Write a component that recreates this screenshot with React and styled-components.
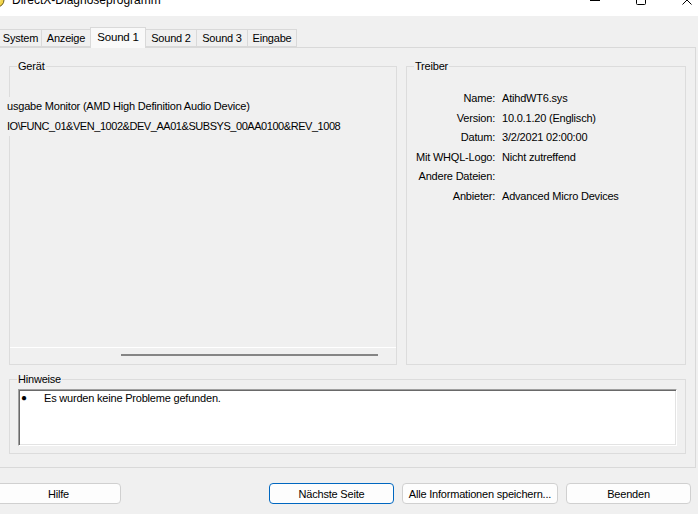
import React from "react";
import styled, { createGlobalStyle } from "styled-components";

const Global = createGlobalStyle`
  html, body { margin: 0; padding: 0; background: #f0f0f0; overflow: hidden; }
  body {
    font-family: "Liberation Sans", Arial, sans-serif;
    font-size: 11px;
    letter-spacing: -0.2px;
    color: #000;
  }
  * { box-sizing: border-box; }
`;

const Window = styled.div`
  width: 715px;
  margin: -16px 0 0 -5px;
  display: flex;
  flex-direction: column;
  background: #f0f0f0;
`;

const TitleBar = styled.div`
  height: 32px;
  background: #fff;
  display: flex;
  align-items: center;
`;

const AppIcon = styled.svg`
  width: 16px;
  height: 16px;
  margin-left: -6px;
  flex: none;
`;

const Title = styled.span`
  margin-left: 7px;
  font-size: 12px;
  letter-spacing: 0;
  white-space: nowrap;
`;

const Controls = styled.div`
  margin-left: auto;
  display: flex;
`;

const ControlButton = styled.div`
  width: 46px;
  height: 32px;
  display: flex;
  align-items: center;
  justify-content: center;
`;

const Client = styled.div`
  padding: 11px 14px 0 4px;
  display: flex;
  flex-direction: column;
`;

const TabStrip = styled.div`
  display: flex;
  align-items: flex-end;
  height: 20px;
`;

const Tab = styled.div`
  position: relative;
  width: ${(p) => p.$w}px;
  height: ${(p) => (p.$active ? 21 : 18)}px;
  margin-left: ${(p) => (p.$first ? 0 : -1)}px;
  margin-bottom: ${(p) => (p.$active ? -1 : 0)}px;
  padding-bottom: ${(p) => (p.$active ? 2 : 0)}px;
  border: 1px solid #d9d9d9;
  border-bottom: ${(p) => (p.$active ? "none" : "1px solid #d9d9d9")};
  background: ${(p) => (p.$active ? "#f9f9f9" : "#f0f0f0")};
  z-index: ${(p) => (p.$active ? 2 : 1)};
  display: flex;
  align-items: center;
  justify-content: center;
  white-space: nowrap;
  font-size: ${(p) => (p.$active ? "11.5px" : "11px")};
`;

const Panel = styled.div`
  height: 421px;
  border: 1px solid #d9d9d9;
  background: #f0f0f0;
  padding: 18px 9px 0 9px;
  display: flex;
  flex-direction: column;
`;

const TopRow = styled.div`
  display: grid;
  grid-template-columns: 388px 280px;
  column-gap: 9px;
  height: 299px;
`;

const GroupBox = styled.div`
  position: relative;
  border: 1px solid #dcdcdc;
  display: flex;
  flex-direction: column;
  height: ${(p) => p.$h || "auto"};
  margin-top: ${(p) => p.$mt || 0}px;
  padding: ${(p) => p.$pad || 0};
`;

const Legend = styled.span`
  position: absolute;
  top: -8px;
  left: 7px;
  padding: 0 1px;
  line-height: 14px;
  background: #f0f0f0;
  white-space: nowrap;
`;

const DeviceLines = styled.div`
  padding-top: 30px;
  flex: 1;
`;

const DeviceLine = styled.div`
  position: relative;
  margin-left: -3px;
  line-height: 19.5px;
  background: #f0f0f0;
  white-space: nowrap;
  width: 340px;
  letter-spacing: ${(p) => p.$ls || "-0.2px"};
`;

const ScrollTrack = styled.div`
  height: 17px;
  border-top: 1px solid #fff;
  padding-top: 6px;
`;

const ScrollThumb = styled.div`
  margin-left: 111px;
  width: 257px;
  height: 2px;
  background: #858585;
`;

const InfoGrid = styled.div`
  display: grid;
  grid-template-columns: 79px auto;
  column-gap: 7px;
  padding: 22px 0 0 9px;
  line-height: 19.5px;
  white-space: nowrap;
`;

const InfoLabel = styled.div`
  text-align: right;
`;

const InfoValue = styled.div``;

const NotesArea = styled.div`
  height: 57px;
  background: #fff;
  border: 1px solid;
  border-color: #a0a0a0 #fff #fff #a0a0a0;
  box-shadow: inset 1px 1px 0 #696969, inset -1px -1px 0 #e3e3e3;
  padding: 1px 0 0 2px;
`;

const NoteRow = styled.div`
  display: flex;
  line-height: 14px;
`;

const Bullet = styled.span`
  width: 23px;
  flex: none;
  font-size: 10px;
`;

const ButtonRow = styled.div`
  display: flex;
  margin: 15px 5px 0 -3px;
  gap: 8px;
`;

const Spacer = styled.div`
  flex: 1;
`;

const Button = styled.button`
  width: ${(p) => p.$w}px;
  height: 21px;
  padding: 0;
  border: 1px solid ${(p) => (p.$primary ? "#0067c0" : "#d0d0d0")};
  border-radius: 4px;
  background: #fdfdfd;
  font-family: inherit;
  font-size: 11px;
  letter-spacing: -0.2px;
  color: #000;
  white-space: nowrap;
  display: flex;
  align-items: center;
  justify-content: center;
`;

const tabs = [
  { label: "System", w: 43 },
  { label: "Anzeige", w: 50 },
  { label: "Sound 1", w: 56, active: true },
  { label: "Sound 2", w: 52 },
  { label: "Sound 3", w: 52 },
  { label: "Eingabe", w: 50 },
];

const driver = [
  ["Name:", "AtihdWT6.sys"],
  ["Version:", "10.0.1.20 (Englisch)"],
  ["Datum:", "3/2/2021 02:00:00"],
  ["Mit WHQL-Logo:", "Nicht zutreffend"],
  ["Andere Dateien:", ""],
  ["Anbieter:", "Advanced Micro Devices"],
];

export default function App() {
  return (
    <>
      <Global />
      <Window>
        <TitleBar>
          <AppIcon viewBox="0 0 16 16">
            <circle cx="8" cy="8" r="7" fill="#f3d54a" stroke="#6b5a1a" strokeWidth="1" />
            <circle cx="8" cy="8" r="3.5" fill="#fbeea0" />
          </AppIcon>
          <Title>DirectX-Diagnoseprogramm</Title>
          <Controls>
            <ControlButton>
              <svg width="10" height="10" viewBox="0 0 10 10">
                <line x1="0" y1="5.5" x2="10" y2="5.5" stroke="#000" strokeWidth="1" />
              </svg>
            </ControlButton>
            <ControlButton>
              <svg width="10" height="10" viewBox="0 0 10 10">
                <rect x="0.5" y="0.5" width="9" height="9" rx="1" fill="none" stroke="#000" strokeWidth="1" />
              </svg>
            </ControlButton>
            <ControlButton>
              <svg width="10" height="10" viewBox="0 0 10 10">
                <path d="M0.5 0.5 L9.5 9.5 M9.5 0.5 L0.5 9.5" stroke="#000" strokeWidth="1" />
              </svg>
            </ControlButton>
          </Controls>
        </TitleBar>
        <Client>
          <TabStrip>
            {tabs.map((t, i) => (
              <Tab key={t.label} $w={t.w} $active={t.active} $first={i === 0}>
                {t.label}
              </Tab>
            ))}
          </TabStrip>
          <Panel>
            <TopRow>
              <GroupBox>
                <Legend>Gerät</Legend>
                <DeviceLines>
                  <DeviceLine>usgabe Monitor (AMD High Definition Audio Device)</DeviceLine>
                  <DeviceLine $ls="-0.45px">IO\FUNC_01&amp;VEN_1002&amp;DEV_AA01&amp;SUBSYS_00AA0100&amp;REV_1008</DeviceLine>
                </DeviceLines>
                <ScrollTrack>
                  <ScrollThumb />
                </ScrollTrack>
              </GroupBox>
              <GroupBox>
                <Legend>Treiber</Legend>
                <InfoGrid>
                  {driver.map(([k, v]) => (
                    <React.Fragment key={k}>
                      <InfoLabel>{k}</InfoLabel>
                      <InfoValue>{v}</InfoValue>
                    </React.Fragment>
                  ))}
                </InfoGrid>
              </GroupBox>
            </TopRow>
            <GroupBox $h="75px" $mt={14} $pad="9px 8px 0 8px">
              <Legend>Hinweise</Legend>
              <NotesArea>
                <NoteRow>
                  <Bullet>●</Bullet>
                  <span>Es wurden keine Probleme gefunden.</span>
                </NoteRow>
              </NotesArea>
            </GroupBox>
          </Panel>
          <ButtonRow>
            <Button $w={125}>Hilfe</Button>
            <Spacer />
            <Button $w={125} $primary>Nächste Seite</Button>
            <Button $w={156}>Alle Informationen speichern...</Button>
            <Button $w={125}>Beenden</Button>
          </ButtonRow>
        </Client>
      </Window>
    </>
  );
}
